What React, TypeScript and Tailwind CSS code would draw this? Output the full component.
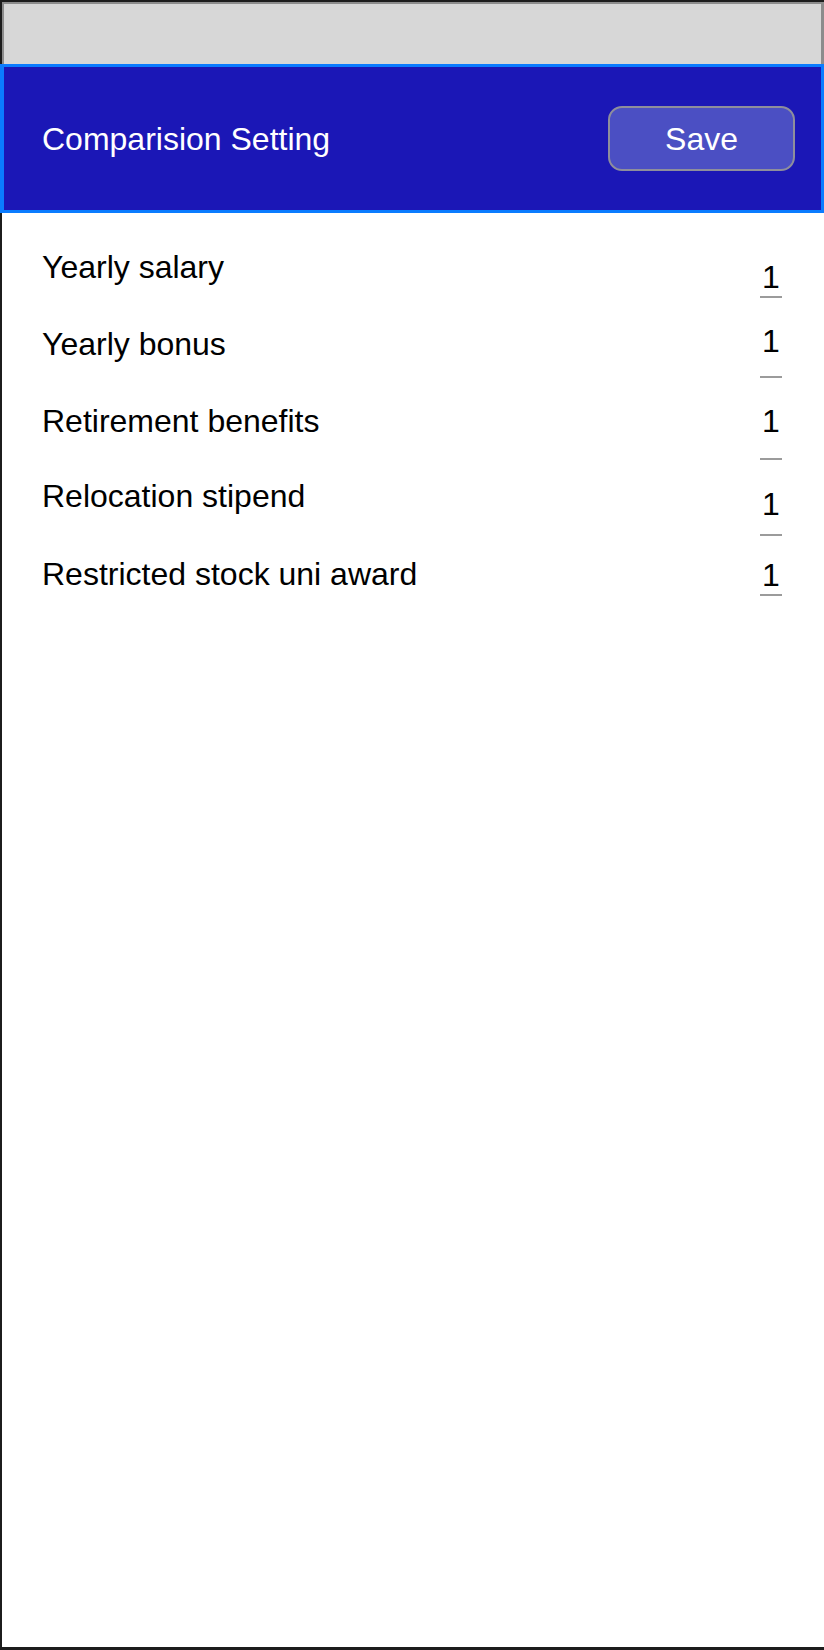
import React from 'react';

interface WeightRow {
  label: string;
  value: string;
  rowClass: string;
  numClass: string;
  lineClass: string;
}

// offsets are a bit uneven in the mockup, kept per row
const rows: WeightRow[] = [
  { label: 'Yearly salary', value: '1', rowClass: 'h-[77px]', numClass: 'mt-[10px]', lineClass: 'mt-[1px]' },
  { label: 'Yearly bonus', value: '1', rowClass: 'h-[77px]', numClass: '-mt-[3px]', lineClass: 'mt-[17px]' },
  { label: 'Retirement benefits', value: '1', rowClass: 'h-[75px]', numClass: 'mt-0', lineClass: 'mt-[19px]' },
  { label: 'Relocation stipend', value: '1', rowClass: 'h-[78px]', numClass: 'mt-[8px]', lineClass: 'mt-[12px]' },
  { label: 'Restricted stock uni award', value: '1', rowClass: 'h-[77px]', numClass: 'mt-[1px]', lineClass: 'mt-[1px]' },
];

const SettingRow: React.FC<{ row: WeightRow }> = ({ row }) => (
  <div className={`flex items-start justify-between ${row.rowClass}`}>
    <span className="text-[32px] leading-[36px] text-black">{row.label}</span>
    <div className={`flex w-[22px] flex-col ${row.numClass}`}>
      <span className="text-center text-[32px] leading-[36px] text-black">{row.value}</span>
      <div className={`h-[2px] w-full bg-[#9b9b9b] ${row.lineClass}`} />
    </div>
  </div>
);

const App: React.FC = () => {
  return (
    <div className="flex h-[1650px] w-[824px] flex-col bg-white font-['Liberation_Sans',Arial,sans-serif]">
      <div className="h-[64px] border-l-2 border-t-2 border-[#1c1c1c]">
        <div className="h-full border-l-2 border-r-[3px] border-t-2 border-[#8c8c8c] bg-[#d7d7d7]" />
      </div>

      <header className="flex h-[149px] items-center justify-between border-[3px] border-l-4 border-[#0a7cff] bg-[#1b17b6] pl-[38px] pr-[26px]">
        <h1 className="text-[32px] leading-[36px] text-white">Comparision Setting</h1>
        <button className="flex h-[65px] w-[187px] items-center justify-center rounded-[14px] border-2 border-[#8e8e9c] bg-[#4b4fc3] text-[32px] leading-[36px] text-white">
          Save
        </button>
      </header>

      <main className="flex-1 border-b-[3px] border-l-2 border-[#1c1c1c] pl-[40px] pr-[42px] pt-9">
        {rows.map((row) => (
          <SettingRow key={row.label} row={row} />
        ))}
      </main>
    </div>
  );
};

export default App;
